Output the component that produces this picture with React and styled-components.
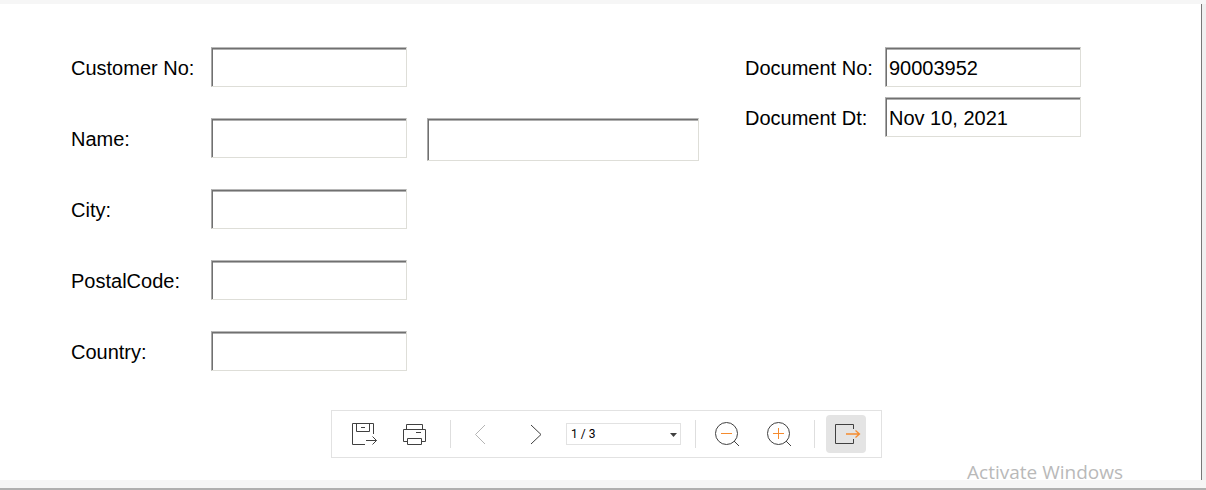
import React from "react";
import styled, { createGlobalStyle } from "styled-components";

const GlobalStyle = createGlobalStyle`
  *, *::before, *::after { box-sizing: border-box; }
  body {
    margin: 0;
    background: #f6f6f6;
    color: #000;
    font-family: "Liberation Sans", Arial, sans-serif;
  }
`;

const Viewer = styled.div`
  display: flex;
  flex-direction: column;
  min-height: 100vh;
  padding: 4px 0 8px;
  border-bottom: 2px solid #b0b0b0;
`;

const Stage = styled.main`
  flex: 1;
  display: flex;
  padding-right: 4px;
  background: #f0f0f0;
`;

const Page = styled.div`
  position: relative;
  flex: 1;
  display: flex;
  flex-direction: column;
  background: #fff;
  border-right: 1px solid #777;
`;

const Form = styled.form`
  display: flex;
  justify-content: space-between;
  align-items: flex-start;
  padding: 43px 120px 39px 71px;
`;

const FieldColumn = styled.div`
  display: flex;
  flex-direction: column;
  gap: ${(p) => p.$gap}px;
`;

const FieldRow = styled.div`
  display: flex;
  align-items: flex-start;
  height: 40px;
`;

const Label = styled.label`
  width: 140px;
  font-size: 20px;
  line-height: 42px;
  white-space: nowrap;
`;

const Field = styled.input`
  width: ${(p) => (p.$wide ? 272 : 196)}px;
  height: ${(p) => (p.$wide ? 43 : 40)}px;
  margin: 0 20px 0 0;
  padding: 2px 3px 0;
  border: 1px solid;
  border-color: #b8b8b8 #deded8 #deded8 #a8a8a8;
  border-radius: 0;
  background: #fff;
  box-shadow: inset 1px 1px 0 #707070, inset 1px 2px 0 #b0b0b0;
  color: #000;
  font: 20px "Liberation Sans", Arial, sans-serif;
  outline: none;

  &:last-child { margin-right: 0; }
`;

const ToolbarDock = styled.div`
  display: flex;
  justify-content: center;
  padding: 0 0 22px 12px;
`;

const Toolbar = styled.div`
  display: flex;
  align-items: center;
  padding: 4px 15px 4px 12px;
  border: 1px solid #e2e2e2;
  background: #fff;
`;

const Group = styled.div`
  display: flex;
  align-items: center;
  gap: ${(p) => p.$gap}px;
`;

const Separator = styled.span`
  width: 1px;
  height: 28px;
  margin: 0 ${(p) => p.$after}px 0 ${(p) => p.$before}px;
  background: #dedede;
`;

const ToolButton = styled.button`
  display: block;
  width: 40px;
  height: 38px;
  padding: 0;
  border: 0;
  border-radius: 4px;
  background: ${(p) => (p.$active ? "#e4e4e4" : "transparent")};
  color: ${(p) => (p.disabled ? "#b4b4b4" : "#404040")};

  svg {
    display: block;
    width: 40px;
    height: 38px;
    fill: none;
    stroke: currentColor;
  }

  .accent { stroke: #f58b2e; }
`;

const PageSelectBox = styled.div`
  position: relative;
  width: 115px;
  height: 22px;

  svg {
    position: absolute;
    top: 10px;
    right: 4px;
    pointer-events: none;
  }
`;

const PageSelect = styled.select`
  display: block;
  width: 100%;
  height: 100%;
  padding: 0 16px 0 4px;
  border: 1px solid #e2e2e2;
  border-radius: 0;
  appearance: none;
  background: #fff;
  color: #000;
  font: 12px Roboto, sans-serif;
`;

const Watermark = styled.div`
  position: absolute;
  right: 78px;
  bottom: -6px;
  color: #b9b9b9;
  font: 19px/28px "Open Sans", "Noto Sans", sans-serif;
  white-space: nowrap;
  pointer-events: none;
`;

const Tool = ({ label, children, ...rest }) => (
  <ToolButton type="button" aria-label={label} {...rest}>
    <svg viewBox="0 0 40 38" aria-hidden="true">{children}</svg>
  </ToolButton>
);

const customerFields = [
  { id: "customer-no", label: "Customer No:" },
  { id: "name", label: "Name:", second: "name-2" },
  { id: "city", label: "City:" },
  { id: "postal-code", label: "PostalCode:" },
  { id: "country", label: "Country:" },
];

const documentFields = [
  { id: "document-no", label: "Document No:", value: "90003952" },
  { id: "document-dt", label: "Document Dt:", value: "Nov 10, 2021" },
];

const Fields = ({ items, gap }) => (
  <FieldColumn $gap={gap}>
    {items.map(({ id, label, value, second }) => (
      <FieldRow key={id}>
        <Label htmlFor={id}>{label}</Label>
        <Field id={id} type="text" defaultValue={value} />
        {second && <Field id={second} type="text" aria-label="Name, second part" $wide />}
      </FieldRow>
    ))}
  </FieldColumn>
);

export default function App() {
  return (
    <>
      <GlobalStyle />
      <Viewer>
        <Stage>
          <Page>
            <Form>
              <Fields items={customerFields} gap={31} />
              <Fields items={documentFields} gap={10} />
            </Form>
            <ToolbarDock>
              <Toolbar role="toolbar" aria-label="Report viewer">
                <Group $gap={11}>
                  <Tool label="Save">
                    <path d="M21 29.5H8.5V8.5H29.5V19M12.5 8.5V16.5H25.5V8.5M17 12.5H21M22 25.5H32.5M28.5 21.5L32.5 25.5L28.5 29.5" />
                  </Tool>
                  <Tool label="Print">
                    <path d="M12.5 26.5H8.5V14.5H30.5V26.5H26.5M11.5 14.5V9.5H27.5V14.5M12.5 23.5H26.5V29.5H12.5ZM21 17.5H26" />
                  </Tool>
                </Group>
                <Separator $before={15} $after={9} />
                <Group $gap={10}>
                  <Group $gap={16}>
                    <Tool label="Previous page" disabled>
                      <path d="M25 10L15.5 19.5L25 29" />
                    </Tool>
                    <Tool label="Next page">
                      <path d="M15 10L25 19.5L15 29" />
                    </Tool>
                  </Group>
                  <PageSelectBox>
                    <PageSelect aria-label="Page" defaultValue="1">
                      <option value="1">1 / 3</option>
                      <option value="2">2 / 3</option>
                      <option value="3">3 / 3</option>
                    </PageSelect>
                    <svg width="7" height="4" viewBox="0 0 7 4" aria-hidden="true">
                      <path d="M0 0H7L3.5 4Z" fill="#404040" />
                    </svg>
                  </PageSelectBox>
                </Group>
                <Separator $before={14} $after={11} />
                <Group $gap={12}>
                  <Tool label="Zoom out">
                    <circle cx="19.5" cy="18.5" r="11" />
                    <path d="M27 26L32 31" />
                    <path className="accent" d="M14 18.5H25" />
                  </Tool>
                  <Tool label="Zoom in">
                    <circle cx="19.5" cy="18.5" r="11" />
                    <path d="M27 26L32 31" />
                    <path className="accent" d="M14 18.5H25M19.5 13V24" />
                  </Tool>
                </Group>
                <Separator $before={15} $after={11} />
                <Tool label="Toggle panel" aria-pressed="true" $active>
                  <path d="M27.5 14V9.5H9.5V28.5H27.5V24" />
                  <path className="accent" strokeWidth="1.3" d="M20 19H33.5M29.5 15.5L33.5 19L29.5 22.5" />
                </Tool>
              </Toolbar>
            </ToolbarDock>
            <Watermark>Activate Windows</Watermark>
          </Page>
        </Stage>
      </Viewer>
    </>
  );
}
